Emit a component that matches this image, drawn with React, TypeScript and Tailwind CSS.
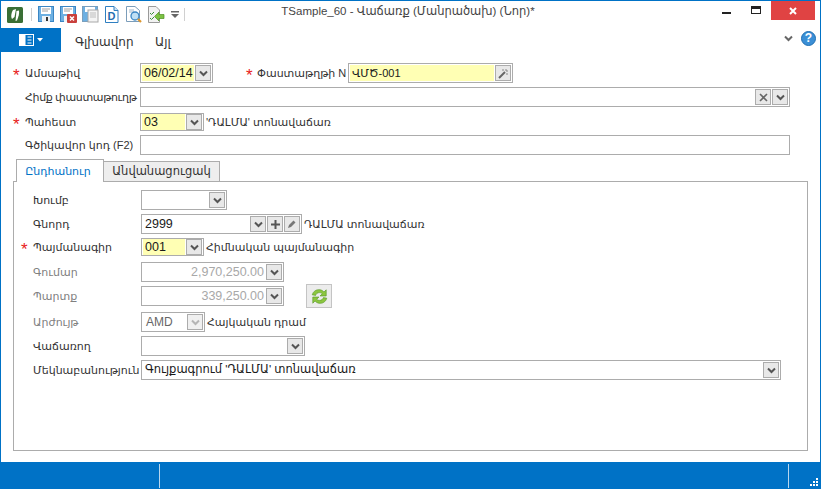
import React from "react";

const FONT = { fontFamily: '"Liberation Sans", "DejaVu Sans", sans-serif' };

const Chevron = ({ color = "#555" }: { color?: string }) => (
  <svg width="9" height="7" viewBox="0 0 9 7">
    <path d="M1 1.5 L4.5 5 L8 1.5" fill="none" stroke={color} strokeWidth="2" />
  </svg>
);

// small square button on the right of a combo box
const DropButton = ({ children, muted }: { children?: React.ReactNode; muted?: boolean }) => (
  <div
    className={`flex h-[16px] w-[16px] shrink-0 items-center justify-center border border-[#acacac] ${
      muted ? "bg-[#f0f0f0]" : "bg-[#e8e8e8]"
    }`}
  >
    {children ?? <Chevron color={muted ? "#b5b5b5" : "#555"} />}
  </div>
);

const Box = ({
  width,
  children,
  className = "h-[20px] text-[#1a1a1a]",
}: {
  width: string;
  children?: React.ReactNode;
  className?: string;
}) => (
  <div
    className={`flex shrink-0 items-center gap-px border border-[#acacac] bg-white px-[1px] text-[12.5px] ${width} ${className}`}
  >
    {children}
  </div>
);

const Row = ({
  label,
  required,
  disabled,
  top,
  inner,
  tight,
  children,
}: {
  label: string;
  required?: boolean;
  disabled?: boolean;
  top: string;
  inner?: boolean;
  tight?: boolean;
  children: React.ReactNode;
}) => (
  <div className={`flex items-center ${top}`}>
    <div className="h-[12px] w-[12px] shrink-0 text-[17px] leading-[17px] text-[#e8201c]">{required ? "*" : ""}</div>
    <div
      className={`shrink-0 whitespace-nowrap text-[11px] ${inner ? "w-[108px]" : "w-[115px]"} ${
        disabled ? "text-[#808080]" : "text-[#333]"
      } ${tight ? "tracking-[-0.35px]" : ""}`}
    >
      {label}
    </div>
    {children}
  </div>
);

const Note = ({ children }: { children: React.ReactNode }) => (
  <span className="ml-[2px] whitespace-nowrap text-[11px] text-[#333]">{children}</span>
);

const LogoIcon = () => (
  <svg width="16" height="16" viewBox="0 0 16 16">
    <rect width="16" height="16" rx="1.5" fill="#3a6f35" />
    <path d="M6 3 L9 2 L7.500 10 L5 12 C3.500 10 4.500 5 6 3 Z" fill="#fff" />
    <path d="M9.500 4 L12 3.500 C12.500 6 11.500 10 10 13.500 L8.500 14 Z" fill="#fff" />
  </svg>
);

const Disk = ({ badge }: { badge?: boolean }) => (
  <svg width="17" height="17" viewBox="0 0 17 17">
    <rect x="0.5" y="0.5" width="15" height="15" fill="#6db0e2" stroke="#3a86c4" />
    <rect x="3" y="1" width="10" height="7" fill="#fff" />
    <path d="M4 3h8M4 5h6" stroke="#a0a0a0" />
    <rect x="4" y="10" width="8" height="6" fill="#eef3f7" />
    <rect x="8" y="11" width="2" height="4" fill="#333" />
    {badge && (
      <g>
        <rect x="7" y="8" width="10" height="9" rx="1" fill="#c9403c" />
        <path d="M10 10.5l4 4M14 10.5l-4 4" stroke="#fff" strokeWidth="1.5" />
      </g>
    )}
  </svg>
);

const DiskDoc = () => (
  <svg width="17" height="17" viewBox="0 0 17 17">
    <rect x="0.5" y="0.5" width="15" height="15" fill="#6db0e2" stroke="#7a9fbd" />
    <rect x="3" y="1" width="10" height="5" fill="#fff" />
    <rect x="6" y="4" width="10" height="12" fill="#f4f4f4" stroke="#a8a8a8" />
    <path d="M8 7h6M8 9h6M8 11h6" stroke="#bdbdbd" />
  </svg>
);

const DocD = () => (
  <svg width="17" height="17" viewBox="0 0 17 17">
    <path d="M1.500 .5H10L14 4.500V16.500H1.500Z" fill="#fff" stroke="#2f7fc1" />
    <path d="M10 .5V4.500H14" fill="#cfe3f3" stroke="#2f7fc1" />
    <text x="3.500" y="14" fontSize="11" fontWeight="700" fill="#1f6fb2" fontFamily="Liberation Sans">D</text>
  </svg>
);

const DocSearch = () => (
  <svg width="17" height="18" viewBox="0 0 17 18">
    <path d="M.5 .5H9L13.500 4.500V15.500H.5Z" fill="#fff" stroke="#7b9dba" />
    <path d="M3 4h5M3 6h5" stroke="#9fb7cb" />
    <circle cx="9" cy="10" r="4" fill="#bfe0f5" stroke="#3a86c4" strokeWidth="1.3" />
    <path d="M12 13L15 16" stroke="#dc962f" strokeWidth="2.200" />
  </svg>
);

const DocCheck = () => (
  <svg width="17" height="17" viewBox="0 0 17 17">
    <path d="M.5 .5H8L11.500 4V16.500H.5Z" fill="#f2f2f2" stroke="#9a9a9a" />
    <path d="M2 7l1.500 1.500L6 6M2 12l1.500 1.500L6 11" fill="none" stroke="#3b8f3b" />
    <path d="M16 8.500H11V6L6.500 10.500L11 15V12.500H16Z" fill="#7cc242" stroke="#4d8f22" strokeWidth="0.7" />
  </svg>
);

const Refresh = () => (
  <svg width="19" height="17" viewBox="0 0 17 15">
    <path d="M2 6C3 2.500 6 1 9 1.500c1.500.2 2.500 1 3.500 2L14.500 1.500V7H9l2-2C9.500 3.500 6 3.500 5 6.500Z" fill="#8cc63f" stroke="#5a9a28" strokeWidth="0.6" />
    <path d="M15 9c-1 3.500-4 5-7 4.500-1.500-.2-2.500-1-3.500-2L2.500 13.500V8H8l-2 2c1.500 1.500 5 1.500 6-1.500Z" fill="#8cc63f" stroke="#5a9a28" strokeWidth="0.6" />
  </svg>
);

export default function App() {
  return (
    <div
      className="flex h-[489px] w-[821px] flex-col overflow-hidden border-x border-t border-[#0072c6] bg-white"
      style={FONT}
    >
      {/* title bar */}
      <div className="flex h-[27px] shrink-0 items-center">
        <div className="ml-[6px] flex items-center">
          <LogoIcon />
          <div className="ml-[8px] h-[13px] w-px bg-[#d0d0d0]" />
          <div className="ml-[6px] flex items-center gap-[5px]">
            <Disk />
            <Disk badge />
            <DiskDoc />
            <DocD />
            <DocSearch />
            <DocCheck />
          </div>
          <svg className="ml-[6px]" width="8" height="7" viewBox="0 0 8 7">
            <path d="M0 0h8v1.500H0ZM0 3h8L4 7Z" fill="#666" />
          </svg>
          <div className="ml-[5px] h-[13px] w-px bg-[#d0d0d0]" />
        </div>
        <div className="mb-[6px] flex-1 whitespace-nowrap pr-[80px] text-center text-[11.5px] text-[#444]">
          TSample_60 - Վաճառք (Մանրածախ) (Նոր)*
        </div>
        <div className="mr-[5px] flex h-[19px] items-start self-start">
          <div className="flex h-[19px] w-[30px] items-center justify-center">
            <div className="mt-[5px] h-[2px] w-[9px] bg-[#222]" />
          </div>
          <div className="flex h-[19px] w-[30px] items-center justify-center">
            <div className="mb-[2px] h-[8px] w-[10px] border border-t-[3px] border-[#222]" />
          </div>
          <div className="flex h-[19px] w-[44px] items-center justify-center bg-[#e04343]">
            <svg width="8" height="8" viewBox="0 0 8 8">
              <path d="M1 1L7 7M7 1L1 7" stroke="#fff" strokeWidth="2" />
            </svg>
          </div>
        </div>
      </div>

      {/* ribbon tabs */}
      <div className="flex h-[24px] shrink-0 items-center text-[12px] text-[#333]">
        <div className="flex h-[24px] w-[60px] items-center justify-center gap-[3px] bg-[#0072c6]">
          <svg width="15" height="12" viewBox="0 0 15 12">
            <rect x="0.500" y="0.500" width="14" height="11" fill="#0072c6" stroke="#fff" />
            <rect x="1" y="1" width="5.500" height="10" fill="#fff" />
            <path d="M8.500 3h4M8.500 6h4M8.500 9h4" stroke="#fff" />
          </svg>
          <svg width="6" height="4" viewBox="0 0 6 4">
            <path d="M0 0h6L3 3.500Z" fill="#fff" />
          </svg>
        </div>
        <div className="ml-[14px] w-[80px] pt-[3px]">Գլխավոր</div>
        <div className="pt-[3px]">Այլ</div>
        <div className="mb-[4px] ml-auto mr-[4px] flex items-center gap-[8px]">
          <Chevron color="#666" />
          <div className="flex h-[15px] w-[15px] items-center justify-center rounded-full border border-[#1f6fb2] bg-[#3b8fd6] text-[12px] font-bold leading-none text-white">
            ?
          </div>
        </div>
      </div>

      {/* document fields */}
      <div className="pl-[12px]">
        <Row label="Ամսաթիվ" required top="mt-[11px]">
          <Box width="w-[73px]">
            <span className="flex-1 bg-[#ffffb4] pl-[2px] leading-[16px]">06/02/14</span>
            <DropButton />
          </Box>
          <div className="ml-[33px] h-[12px] w-[11px] text-[17px] leading-[17px] text-[#e8201c]">*</div>
          <div className="w-[91px] whitespace-nowrap text-[11px] text-[#333]">Փաստաթղթի N</div>
          <Box width="w-[165px]">
            <span className="flex-1 bg-[#ffffb4] pl-[2px] text-[11px] leading-[16px]">ՎՄԾ-001</span>
            <DropButton>
              <svg width="11" height="11" viewBox="0 0 11 11">
                <path d="M1 10L7 4" stroke="#666" strokeWidth="2" />
                <path d="M8 1v2M10 3H8M10 6H8M5 1v2" stroke="#888" />
              </svg>
            </DropButton>
          </Box>
        </Row>
        <Row tight label="Հիմք փաստաթուղթ" top="mt-[4px]">
          <Box width="w-[650px]">
            <div className="flex-1" />
            <DropButton>
              <svg width="9" height="9" viewBox="0 0 9 9">
                <path d="M1 1L8 8M8 1L1 8" stroke="#666" strokeWidth="1.600" />
              </svg>
            </DropButton>
            <DropButton />
          </Box>
        </Row>
        <Row label="Պահեստ" required top="mt-[6px]">
          <Box width="w-[64px]" className="h-[18px] text-[#1a1a1a]">
            <span className="flex-1 bg-[#ffffb4] pl-[2px] leading-[16px]">03</span>
            <DropButton />
          </Box>
          <Note>'ԴԱԼՄԱ' տոնավաճառ</Note>
        </Row>
        <Row label="Գծիկավոր կոդ (F2)" top="mt-[4px]">
          <Box width="w-[650px]" />
        </Row>
      </div>

      {/* tabs */}
      <div className="mt-[4px] flex h-[22px] shrink-0 items-end pl-[15px]">
        <div className="z-10 -mb-px flex h-[23px] w-[88px] items-center justify-center border border-b-0 border-[#acacac] bg-white pr-[4px] text-[11px] text-[#0072c6]">
          Ընդհանուր
        </div>
        <div className="flex h-[20px] w-[116px] items-center justify-center border border-b-0 border-l-0 border-[#acacac] bg-[#eeeeee] text-[11.5px] text-[#333]">
          Անվանացուցակ
        </div>
      </div>
      <div className="mx-[12px] h-[270px] w-[795px] shrink-0 border border-[#acacac] pl-[7px]">
        <Row inner label="Խումբ" top="mt-[8px]">
          <Box width="w-[86px]">
            <div className="flex-1" />
            <DropButton />
          </Box>
        </Row>
        <Row inner label="Գնորդ" top="mt-[4px]">
          <Box width="w-[161px]">
            <span className="flex-1 pl-[2px]">2999</span>
            <DropButton />
            <DropButton>
              <svg width="9" height="9" viewBox="0 0 9 9">
                <path d="M4.500 0v9M0 4.500h9" stroke="#555" strokeWidth="2" />
              </svg>
            </DropButton>
            <DropButton>
              <svg width="10" height="10" viewBox="0 0 10 10">
                <path d="M1 9L2 6L6.500 1.500L8.500 3.500L4 8Z" fill="#777" />
              </svg>
            </DropButton>
          </Box>
          <Note>ԴԱԼՄԱ տոնավաճառ</Note>
        </Row>
        <Row inner label="Պայմանագիր" required top="mt-[4px]">
          <Box width="w-[63px]" className="h-[18px] text-[#1a1a1a]">
            <span className="flex-1 bg-[#ffffb4] pl-[2px] leading-[16px]">001</span>
            <DropButton />
          </Box>
          <Note>Հիմնական պայմանագիր</Note>
        </Row>
        <Row inner label="Գումար" disabled top="mt-[6px]">
          <Box width="w-[143px]" className="h-[20px] text-[#a8a8a8]">
            <span className="flex-1 pr-[1px] text-right">2,970,250.00</span>
            <DropButton />
          </Box>
        </Row>
        <Row inner label="Պարտք" disabled top="mt-[4px]">
          <Box width="w-[143px]" className="h-[20px] text-[#a8a8a8]">
            <span className="flex-1 pr-[1px] text-right">339,250.00</span>
            <DropButton />
          </Box>
          <div className="-my-[2px] ml-[22px] flex h-[24px] w-[26px] items-center justify-center border border-[#c4c4c4] bg-[#ececec]">
            <Refresh />
          </div>
        </Row>
        <Row inner label="Արժույթ" disabled top="mt-[6px]">
          <Box width="w-[64px]" className="h-[20px] text-[#666]">
            <span className="flex-1 pl-[3px] text-[12px]">AMD</span>
            <DropButton muted />
          </Box>
          <Note>Հայկական դրամ</Note>
        </Row>
        <Row inner label="Վաճառող" top="mt-[4px]">
          <Box width="w-[164px]">
            <div className="flex-1" />
            <DropButton />
          </Box>
        </Row>
        <Row inner label="Մեկնաբանություն" top="mt-[4px]">
          <Box width="w-[640px]">
            <span className="flex-1 pl-[2px] text-[11.5px]">Գույքագրում 'ԴԱԼՄԱ' տոնավաճառ</span>
            <DropButton />
          </Box>
        </Row>
      </div>

      {/* status bar */}
      <div className="-mx-px mt-auto flex h-[27px] shrink-0 items-center bg-[#0072c6]">
        <div className="h-[24px] w-[160px] border-r border-[#b8d6ee]" />
        <div className="ml-auto h-[24px] w-px bg-[#b8d6ee]" />
        <div className="flex h-[27px] w-[32px] items-end justify-end pb-[3px] pr-[3px]">
          <svg width="8" height="8" viewBox="0 0 8 8">
            <path d="M6 0h2v2H6ZM3 3h2v2H3ZM6 3h2v2H6ZM0 6h2v2H0ZM3 6h2v2H3ZM6 6h2v2H6Z" fill="#fff" />
          </svg>
        </div>
      </div>
    </div>
  );
}
